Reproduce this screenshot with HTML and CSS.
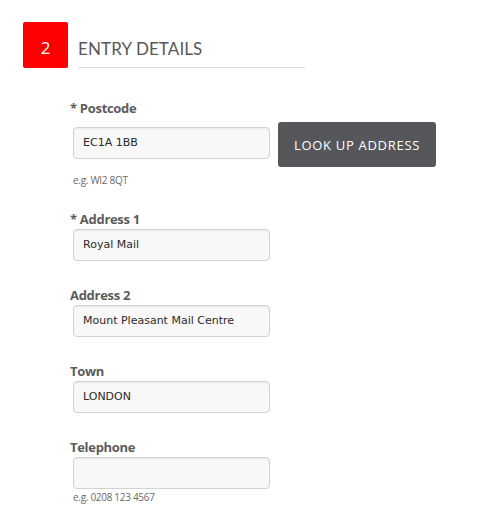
FILE: index.html
```html
<!DOCTYPE html>
<html>
<head>
<meta charset="utf-8">
<link rel="stylesheet" href="styles.css">
</head>
<body>
<section class="step">
  <header class="step-head">
    <div class="step-num">2</div>
    <h2 class="step-title">ENTRY DETAILS</h2>
  </header>
  <form class="form">
    <div class="field field-postcode">
      <label class="label">* Postcode</label>
      <div class="postcode-row">
        <div class="input input-postcode">EC1A 1BB</div>
        <button type="button" class="btn">LOOK UP ADDRESS</button>
      </div>
      <div class="hint hint-postcode">e.g. WI2 8QT</div>
    </div>
    <div class="field">
      <label class="label">* Address 1</label>
      <div class="input">Royal Mail</div>
    </div>
    <div class="field">
      <label class="label">Address 2</label>
      <div class="input">Mount Pleasant Mail Centre</div>
    </div>
    <div class="field">
      <label class="label">Town</label>
      <div class="input">LONDON</div>
    </div>
    <div class="field">
      <label class="label">Telephone</label>
      <div class="input"></div>
      <div class="hint hint-phone">e.g. 0208 123 4567</div>
    </div>
  </form>
</section>
</body>
</html>
```
FILE: styles.css
```css
* { box-sizing: border-box; }
html, body { margin: 0; padding: 0; background: #fff; }
body { font-family: "Open Sans", sans-serif; color: #555; width: 498px; height: 510px; overflow: hidden; }

.step-head {
  display: flex;
  align-items: flex-start;
  padding: 22px 0 0 23px;
}
.step-num {
  width: 45px;
  height: 46px;
  background: #fe0000;
  border-radius: 2px;
  color: #fff;
  font-family: "Open Sans", sans-serif;
  font-size: 17px;
  line-height: 20px;
  text-align: center;
  padding-top: 16px;
}
.step-title {
  margin: 0 0 0 10px;
  width: 227px;
  height: 46px;
  border-bottom: 1px solid #dcdcdc;
  font-family: "Lato", sans-serif;
  font-weight: 400;
  font-size: 17px;
  line-height: 20px;
  padding-top: 17px;
  color: #58585a;
  letter-spacing: 0.1px;
}

.form {
  padding: 32px 0 0 70px;
}
.field { margin-bottom: 26px; }
.field-postcode { margin-bottom: 24px; }
.label {
  display: block;
  font-family: "Open Sans", sans-serif;
  font-weight: 700;
  font-size: 13px;
  line-height: 16px;
  color: #5b5b5b;
  letter-spacing: -0.3px;
  margin-bottom: 2px;
}
.postcode-row {
  display: flex;
  align-items: flex-start;
  margin-top: 6px;
}
.input {
  width: 197px;
  height: 32px;
  margin-left: 3px;
  background: #f8f8f8;
  border: 1px solid #d2d2d2;
  border-radius: 4px;
  box-shadow: inset 0 1px 2px rgba(0,0,0,0.06);
  font-family: "DejaVu Sans", sans-serif;
  font-size: 11px;
  line-height: 30px;
  color: #2a2a2a;
  padding-left: 9px;
}
.input-postcode { margin-top: 5px; }
.btn {
  margin-left: 8px;
  width: 158px;
  height: 45px;
  background: #56575b;
  border: none;
  border-radius: 3px;
  color: #fff;
  font-family: "Open Sans", sans-serif;
  font-size: 13px;
  letter-spacing: 0.7px;
  padding: 0;
  cursor: pointer;
}
.hint {
  margin-left: 3px;
  font-family: "Open Sans", sans-serif;
  font-size: 10px;
  line-height: 14px;
  color: #6a6a6a;
  letter-spacing: -0.3px;
}
.hint-postcode { margin-top: 6px; }
.hint-phone { margin-top: 1px; }
```
